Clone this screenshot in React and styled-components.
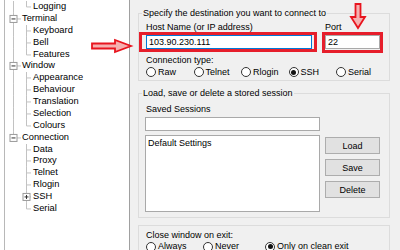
import React from "react";
import styled, { createGlobalStyle } from "styled-components";

const GlobalStyle = createGlobalStyle`
  html, body {
    margin: 0;
    padding: 0;
    background: #f0f0f0;
  }
  body {
    font-family: "Liberation Sans", Arial, sans-serif;
    font-size: 9px;
    color: #000;
  }
`;

const ROW_H = 11.88;

const treeItems = [
  { label: "Logging", kind: "child", trunk: true, last: true },
  { label: "Terminal", kind: "top", box: "minus" },
  { label: "Keyboard", kind: "child", trunk: true },
  { label: "Bell", kind: "child", trunk: true },
  { label: "Features", kind: "child", trunk: true, last: true },
  { label: "Window", kind: "top", box: "minus" },
  { label: "Appearance", kind: "child", trunk: true },
  { label: "Behaviour", kind: "child", trunk: true },
  { label: "Translation", kind: "child", trunk: true },
  { label: "Selection", kind: "child", trunk: true },
  { label: "Colours", kind: "child", trunk: true, last: true },
  { label: "Connection", kind: "top", box: "minus", last: true },
  { label: "Data", kind: "child" },
  { label: "Proxy", kind: "child" },
  { label: "Telnet", kind: "child" },
  { label: "Rlogin", kind: "child" },
  { label: "SSH", kind: "child", box: "plus" },
  { label: "Serial", kind: "child", last: true },
];

const LINE = "#c2c2c2";

// little +/- box of the tree
const ToggleBox = ({ x, y, type }) => (
  <g>
    <rect x={x + 0.5} y={y + 0.5} width="7" height="7" fill="#fff" stroke="#9a9a9a" />
    <line x1={x + 2} y1={y + 4} x2={x + 6} y2={y + 4} stroke="#333" />
    {type === "plus" && (
      <line x1={x + 4} y1={y + 2} x2={x + 4} y2={y + 6} stroke="#333" />
    )}
  </g>
);

const Guide = ({ kind, trunk, last, box }) => {
  const w = kind === "top" ? 22 : 33;
  const c = ROW_H / 2;
  return (
    <svg width={w} height={ROW_H} style={{ flex: "none" }}>
      {kind === "top" ? (
        <>
          <line x1="13.5" y1="0" x2="13.5" y2={last ? c : ROW_H} stroke={LINE} />
          <line x1="17" y1={c} x2="21" y2={c} stroke={LINE} />
          {box && <ToggleBox x={9.5} y={c - 4} type={box} />}
        </>
      ) : (
        <>
          {trunk && <line x1="13.5" y1="0" x2="13.5" y2={ROW_H} stroke={LINE} />}
          <line x1="26.5" y1="0" x2="26.5" y2={last ? c : ROW_H} stroke={LINE} />
          <line x1="26.5" y1={c} x2="31" y2={c} stroke={LINE} />
          {box && <ToggleBox x={22.5} y={c - 4} type={box} />}
        </>
      )}
    </svg>
  );
};

const Radio = ({ label, checked }) => (
  <RadioItem>
    <RadioCircle>{checked && <RadioDot />}</RadioCircle>
    <span>{label}</span>
  </RadioItem>
);

const RightArrow = () => (
  <ArrowRight width="45" height="16" viewBox="0 0 45 16">
    <polygon
      points="2,5.5 25,5.5 25,2 41,8 25,14 25,10.5 2,10.5"
      fill="#f5b0b0"
      stroke="#e8141e"
      strokeWidth="1.8"
      strokeLinejoin="miter"
    />
  </ArrowRight>
);

const DownArrow = () => (
  <ArrowDown width="18" height="28" viewBox="0 0 18 28">
    <polygon
      points="6.5,2 11.5,2 11.5,15 16,15 9,26 2,15 6.5,15"
      fill="#f5b0b0"
      stroke="#e8141e"
      strokeWidth="1.8"
    />
  </ArrowDown>
);

export default function App() {
  return (
    <Screen>
      <GlobalStyle />
      <Tree>
        {treeItems.map((item) => (
          <TreeRow key={item.label}>
            <Guide {...item} />
            <span>{item.label}</span>
          </TreeRow>
        ))}
      </Tree>

      <Pane>
        <Group $pad="8px 0 2.5px 7px">
          <Legend>Specify the destination you want to connect to</Legend>
          <HostRow>
            <FieldCol $w={166}>
              <Label>Host Name (or IP address)</Label>
              <FieldWrap>
                <TextBox $focused readOnly value="103.90.230.111" />
                <Mark $t={-3} $r={-5} $b={-3} $l={-7} />
              </FieldWrap>
            </FieldCol>
            <FieldCol $w={55} $ml={13}>
              <Label>Port</Label>
              <FieldWrap>
                <TextBox readOnly value="22" />
                <Mark $t={-3} $r={-3} $b={-4} $l={-3} />
              </FieldWrap>
            </FieldCol>
          </HostRow>
          <Label $mt={5.5}>Connection type:</Label>
          <RadioRow $cols="repeat(5, 47.5px)" $mt={1}>
            <Radio label="Raw" />
            <Radio label="Telnet" />
            <Radio label="Rlogin" />
            <Radio label="SSH" checked />
            <Radio label="Serial" />
          </RadioRow>
        </Group>

        <Group $pad="9.5px 0 5px 6px" $mt={12}>
          <Legend>Load, save or delete a stored session</Legend>
          <Label $ml={1}>Saved Sessions</Label>
          <TextBox $w={175} $mt={2.5} readOnly value="" />
          <SessionRow>
            <SessionList>
              <div>Default Settings</div>
            </SessionList>
            <ButtonCol>
              <Button>Load</Button>
              <Button>Save</Button>
              <Button>Delete</Button>
            </ButtonCol>
          </SessionRow>
        </Group>

        <Group $pad="4px 0 4px 7px" $mt={7}>
          <Label>Close window on exit:</Label>
          <RadioRow $cols="57px 62px auto">
            <Radio label="Always" />
            <Radio label="Never" />
            <Radio label="Only on clean exit" checked />
          </RadioRow>
        </Group>
      </Pane>

      <RightArrow />
      <DownArrow />
    </Screen>
  );
}

const Screen = styled.div`
  position: relative;
  display: flex;
  width: 400px;
  height: 250px;
  overflow: hidden;
  background: #f0f0f0;
`;

const Tree = styled.div`
  flex: none;
  box-sizing: border-box;
  width: 130px;
  height: 100%;
  padding-top: 1px;
  font-size: 9.3px;
  border-right: 1px solid #a0a0a0;
  background: linear-gradient(#b8b8b8, #b8b8b8) 4px 0 / 1px 100% no-repeat, #fff;
`;

const TreeRow = styled.div`
  display: flex;
  align-items: center;
  height: ${ROW_H}px;
  line-height: ${ROW_H}px;
  white-space: nowrap;
`;

const Pane = styled.div`
  flex: 1;
  display: flex;
  flex-direction: column;
  padding: 13px 10px 0 8px;
`;

const Group = styled.div`
  position: relative;
  flex: none;
  border: 1px solid #dcdcdc;
  padding: ${(p) => p.$pad};
  margin-top: ${(p) => p.$mt || 0}px;
`;

const Legend = styled.span`
  position: absolute;
  top: -6.5px;
  left: 3px;
  padding: 0 1px;
  line-height: 11px;
  background: #f0f0f0;
  white-space: nowrap;
`;

const Label = styled.div`
  height: 11px;
  line-height: 11px;
  white-space: nowrap;
  margin-top: ${(p) => p.$mt || 0}px;
  margin-left: ${(p) => p.$ml || 0}px;
`;

const HostRow = styled.div`
  display: flex;
`;

const FieldCol = styled.div`
  display: flex;
  flex-direction: column;
  gap: 2px;
  width: ${(p) => p.$w}px;
  margin-left: ${(p) => p.$ml || 0}px;
`;

const FieldWrap = styled.div`
  position: relative;
`;

const TextBox = styled.input`
  display: block;
  box-sizing: border-box;
  width: ${(p) => (p.$w ? `${p.$w}px` : "100%")};
  height: 14px;
  margin: ${(p) => p.$mt || 0}px 0 0;
  padding: 0 2px;
  border: 1px solid ${(p) => (p.$focused ? "#0078d7" : "#a9a9a9")};
  background: #fff;
  font: inherit;
  color: #000;
  outline: none;
`;

const Mark = styled.div`
  position: absolute;
  top: ${(p) => p.$t}px;
  right: ${(p) => p.$r}px;
  bottom: ${(p) => p.$b}px;
  left: ${(p) => p.$l}px;
  border: 3px solid #e61e2b;
  pointer-events: none;
`;

const RadioRow = styled.div`
  display: grid;
  grid-template-columns: ${(p) => p.$cols};
  height: 11px;
  margin-top: ${(p) => p.$mt || 0}px;
`;

const RadioItem = styled.div`
  display: flex;
  align-items: center;
  gap: 2px;
  white-space: nowrap;
  line-height: 11px;
`;

const RadioCircle = styled.span`
  flex: none;
  display: flex;
  align-items: center;
  justify-content: center;
  box-sizing: border-box;
  width: 10px;
  height: 10px;
  border: 1px solid #333;
  border-radius: 50%;
  background: #fff;
`;

const RadioDot = styled.span`
  width: 5px;
  height: 5px;
  border-radius: 50%;
  background: #111;
`;

const SessionRow = styled.div`
  display: flex;
  margin-top: 4px;
`;

const SessionList = styled.div`
  box-sizing: border-box;
  width: 175px;
  height: 77px;
  padding: 1px 2px;
  line-height: 12px;
  border: 1px solid #a9a9a9;
  background: #fff;
`;

const ButtonCol = styled.div`
  display: flex;
  flex-direction: column;
  gap: 5px;
  margin-left: 5px;
  padding-top: 2px;
`;

const Button = styled.button`
  box-sizing: border-box;
  width: 55px;
  height: 17px;
  padding: 0;
  border: 1px solid #adadad;
  background: #e1e1e1;
  font: inherit;
  color: #000;
`;

const ArrowRight = styled.svg`
  position: absolute;
  left: 90px;
  top: 38px;
`;

const ArrowDown = styled.svg`
  position: absolute;
  left: 349px;
  top: 2px;
`;
